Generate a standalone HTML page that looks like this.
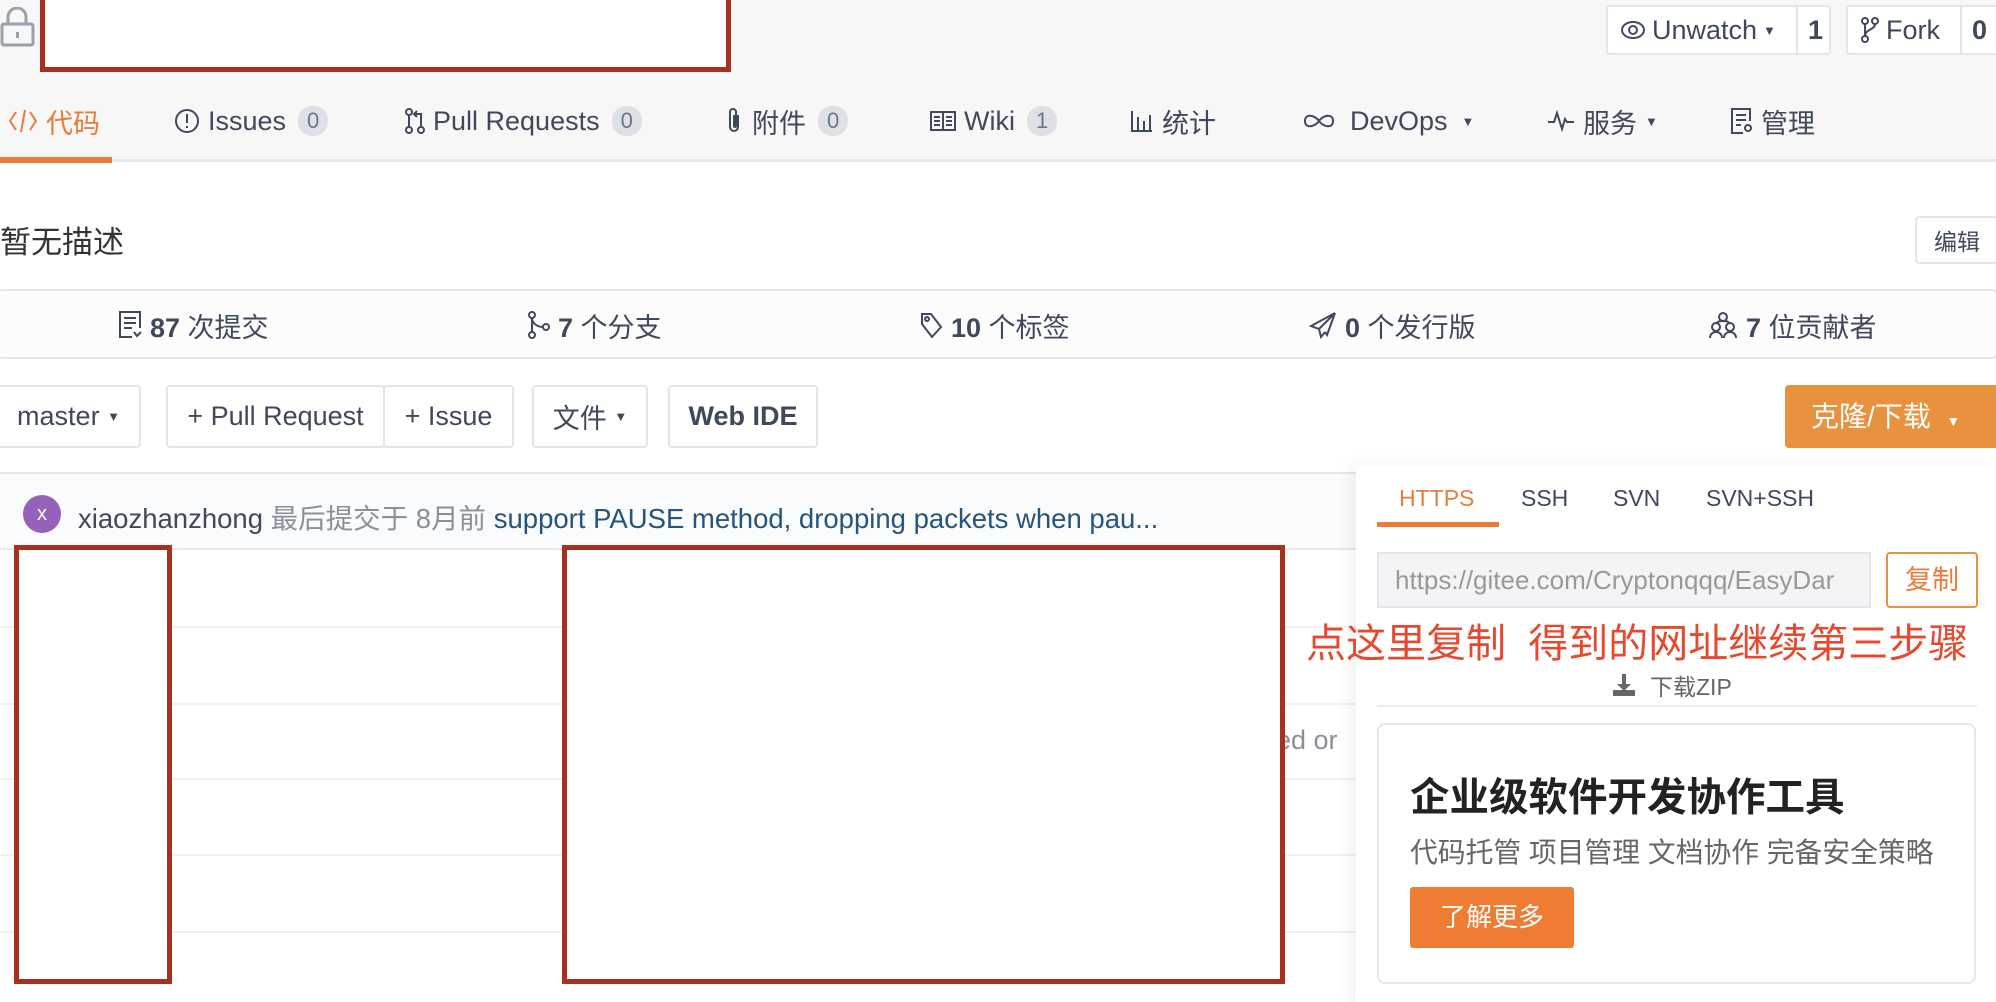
<!DOCTYPE html>
<html><head><meta charset="utf-8"><style>
*{margin:0;padding:0;box-sizing:border-box}
body{width:1996px;height:1002px;overflow:hidden;background:#fff;font-family:"Liberation Sans","Noto Sans CJK SC",sans-serif;color:#40485b;position:relative}
.a{position:absolute;white-space:nowrap}
.t{position:absolute;top:96px;height:50px;display:flex;align-items:center;font-size:27px;white-space:nowrap;gap:8px}
.s{position:absolute;top:300px;height:50px;display:flex;align-items:center;font-size:27px;white-space:nowrap;gap:8px}
.badge{display:inline-block;background:#dde0e5;color:#6a7590;border-radius:14px;font-size:22px;padding:2px 9px;margin-left:4px}
.btn{position:absolute;border:2px solid #e3e5e8;border-radius:4px;background:#fff;font-size:27px;display:flex;align-items:center;justify-content:center;color:#40485b;white-space:nowrap}
svg{flex:none}
.ic{fill:none;stroke:#40485b;stroke-width:2}
</style></head><body>
<div class="a" style="left:0;top:0;width:1996px;height:162px;background:#f7f7f8;border-bottom:3px solid #e6e7ea"></div>
<div class="a" style="left:0;top:157px;width:112px;height:6px;background:#e87c38"></div>
<svg class="a" style="left:0;top:7px" width="36" height="40" viewBox="0 0 36 40"><rect x="2" y="17" width="31" height="21" rx="2" fill="none" stroke="#9aa0ac" stroke-width="3"/><path d="M8 17V10a9 9 0 0 1 18 0v7" fill="none" stroke="#9aa0ac" stroke-width="3"/><line x1="17.5" y1="25" x2="17.5" y2="31" stroke="#9aa0ac" stroke-width="3"/></svg>
<div class="a" style="left:40px;top:-6px;width:691px;height:78px;border:5px solid #a8301f;background:#fff"></div>
<div class="btn" style="left:1606px;top:5px;width:225px;height:50px;justify-content:flex-start;padding-left:12px;gap:6px"><svg width="26" height="20" viewBox="0 0 26 20"><ellipse class="ic" cx="13" cy="10" rx="11" ry="8"/><circle class="ic" cx="13" cy="10" r="4"/></svg>Unwatch<span style="font-size:13px">&#9660;</span><span style="position:absolute;left:188px;top:0;height:46px;border-left:2px solid #e3e5e8;padding-left:10px;line-height:46px;font-weight:bold">1</span></div>
<div class="btn" style="left:1846px;top:5px;width:155px;height:50px;justify-content:flex-start;padding-left:12px;gap:6px"><svg width="20" height="26" viewBox="0 0 20 26"><circle class="ic" cx="5" cy="4" r="3"/><circle class="ic" cx="15" cy="4" r="3"/><circle class="ic" cx="5" cy="22" r="3"/><path class="ic" d="M5 7v12M15 7c0 6-10 5-10 12"/></svg>Fork<span style="position:absolute;left:112px;top:0;height:46px;border-left:2px solid #e3e5e8;padding-left:10px;line-height:46px;font-weight:bold">0</span></div>

<div class="t" style="left:8px;color:#e87c38"><svg width="30" height="26" viewBox="0 0 30 26"><path d="M8 4L2 13l6 9M22 4l6 9-6 9M17 2l-4 22" fill="none" stroke="#e87c38" stroke-width="2"/></svg>代码</div>
<div class="t" style="left:174px"><svg width="26" height="26" viewBox="0 0 26 26"><circle class="ic" cx="13" cy="13" r="11"/><path class="ic" d="M13 6v9M13 18v2"/></svg>Issues<span class="badge">0</span></div>
<div class="t" style="left:405px"><svg width="20" height="26" viewBox="0 0 20 26"><circle class="ic" cx="4" cy="4" r="3"/><circle class="ic" cx="4" cy="22" r="3"/><circle class="ic" cx="16" cy="22" r="3"/><path class="ic" d="M4 7v12M16 19V6h-6M12 3l-3 3 3 3"/></svg>Pull Requests<span class="badge">0</span></div>
<div class="t" style="left:724px"><svg width="20" height="28" viewBox="0 0 20 28"><path class="ic" d="M14 8v12a4 4 0 0 1-8 0V5a3 3 0 0 1 6 0v14a1 1 0 0 1-2 0V8"/></svg>附件<span class="badge">0</span></div>
<div class="t" style="left:930px"><svg width="26" height="22" viewBox="0 0 26 22"><rect class="ic" x="1" y="2" width="24" height="18"/><path class="ic" d="M13 2v18M4 7h6M4 11h6M4 15h6M16 7h6M16 11h6M16 15h6"/></svg>Wiki<span class="badge">1</span></div>
<div class="t" style="left:1130px"><svg width="24" height="24" viewBox="0 0 24 24"><path class="ic" d="M2 2v20h20M8 8v14M14 12v10M20 6v16"/></svg>统计</div>
<div class="t" style="left:1302px;gap:14px"><svg width="34" height="20" viewBox="0 0 34 20"><path class="ic" stroke-width="3" d="M17 10c-4-6-14-8-14 0s10 6 14 0 14-8 14 0-10 6-14 0z"/></svg>DevOps<span style="font-size:13px">&#9660;</span></div>
<div class="t" style="left:1547px"><svg width="28" height="24" viewBox="0 0 28 24"><path class="ic" d="M1 13h6l3-9 5 16 3-10 2 3h7"/></svg>服务<span style="font-size:13px">&#9660;</span></div>
<div class="t" style="left:1729px"><svg width="24" height="28" viewBox="0 0 24 28"><path class="ic" d="M14 26H3V2h18v12M7 8h10M7 13h10M7 18h5"/><circle class="ic" cx="19" cy="21" r="3"/></svg>管理</div>

<div class="a" style="top:217px;left:0;font-size:31px;color:#333">暂无描述</div>
<div class="btn" style="left:1915px;top:216px;width:84px;height:48px;font-size:23px">编辑</div>

<div class="a" style="left:-4px;top:289px;width:2002px;height:70px;border:2px solid #e6e7ea;border-radius:6px;background:#fcfcfd"></div>
<div class="s" style="left:118px"><svg width="24" height="30" viewBox="0 0 24 30"><path class="ic" d="M14 27H2V2h20v16M6 8h12M6 13h12M6 18h8M16 22l3 4 4-4"/></svg><span><b>87</b> 次提交</span></div>
<div class="s" style="left:528px"><svg width="22" height="28" viewBox="0 0 22 28"><circle class="ic" cx="4" cy="4" r="3"/><circle class="ic" cx="4" cy="24" r="3"/><circle class="ic" cx="18" cy="16" r="3"/><path class="ic" d="M4 7v14M15 16c-6 0-11-4-11-9"/></svg><span><b>7</b> 个分支</span></div>
<div class="s" style="left:919px"><svg width="24" height="28" viewBox="0 0 24 28"><path class="ic" d="M3 3h9l10 13-9 10L3 13z"/><circle class="ic" cx="8" cy="8" r="2"/></svg><span><b>10</b> 个标签</span></div>
<div class="s" style="left:1309px"><svg width="28" height="28" viewBox="0 0 28 28"><path class="ic" d="M26 2L2 15l8 3 2 8 4-5M26 2L10 18M26 2l-8 22-2-3"/></svg><span><b>0</b> 个发行版</span></div>
<div class="s" style="left:1708px"><svg width="30" height="28" viewBox="0 0 30 28"><circle class="ic" cx="15" cy="6" r="4"/><circle class="ic" cx="8" cy="16" r="4"/><circle class="ic" cx="22" cy="16" r="4"/><path class="ic" d="M2 27c0-4 3-6 6-6s6 2 6 6M16 27c0-4 3-6 6-6s6 2 6 6M9 12c1-2 3-2 6-2s5 0 6 2"/></svg><span><b>7</b> 位贡献者</span></div>

<div class="btn" style="left:-4px;top:385px;width:145px;height:63px">master&nbsp;<span style="font-size:13px">&#9660;</span></div>
<div class="btn" style="left:166px;top:385px;width:219px;height:63px">+ Pull Request</div>
<div class="btn" style="left:383px;top:385px;width:131px;height:63px">+ Issue</div>
<div class="btn" style="left:532px;top:385px;width:116px;height:63px">文件&nbsp;<span style="font-size:13px">&#9660;</span></div>
<div class="btn" style="left:668px;top:385px;width:150px;height:63px;font-weight:bold">Web IDE</div>
<div class="a" style="left:1785px;top:385px;width:215px;height:63px;background:#e8923f;border-radius:4px;color:#fff;font-size:28px;line-height:63px;padding-left:26px">克隆/下载 &nbsp;<span style="font-size:14px">&#9660;</span></div>

<div class="a" style="left:0;top:472px;width:1996px;height:78px;background:#fafbfc;border-top:2px solid #e6e7ea;border-bottom:2px solid #e6e7ea"></div>
<div class="a" style="left:23px;top:495px;width:38px;height:38px;border-radius:50%;background:#9462b8;color:#fff;font-size:20px;text-align:center;line-height:38px">x</div>
<div class="a" style="left:78px;top:496px;font-size:27.5px;color:#40485b">xiaozhanzhong <span style="color:#8a8f99">最后提交于 8月前</span> <span style="color:#275579">support PAUSE method, dropping packets when pau...</span></div>
<div class="a" style="left:0;top:626px;width:1996px;border-top:2px solid #f0f1f3"></div>
<div class="a" style="left:0;top:703px;width:1996px;border-top:2px solid #f0f1f3"></div>
<div class="a" style="left:0;top:778px;width:1996px;border-top:2px solid #f0f1f3"></div>
<div class="a" style="left:0;top:854px;width:1996px;border-top:2px solid #f0f1f3"></div>
<div class="a" style="left:0;top:931px;width:1996px;border-top:2px solid #f0f1f3"></div>
<div class="a" style="left:1276px;top:725px;font-size:27px;color:#8a8f99">ed or</div>
<div class="a" style="left:14px;top:545px;width:158px;height:439px;border:5px solid #a8301f;background:#fff"></div>
<div class="a" style="left:562px;top:545px;width:723px;height:439px;border:5px solid #a8301f;background:#fff"></div>

<div class="a" style="left:1356px;top:466px;width:640px;height:536px;background:#fff;box-shadow:-6px 0 14px rgba(0,0,0,0.06)"></div>
<div class="a" style="left:1399px;top:485px;font-size:23px;color:#e87c38">HTTPS</div>
<div class="a" style="left:1521px;top:485px;font-size:23px">SSH</div>
<div class="a" style="left:1613px;top:485px;font-size:23px">SVN</div>
<div class="a" style="left:1706px;top:485px;font-size:23px">SVN+SSH</div>
<div class="a" style="left:1377px;top:522px;width:122px;height:5px;background:#e87c38"></div>
<div class="a" style="left:1377px;top:552px;width:494px;height:56px;border:2px solid #e3e5e8;background:#f3f4f6;font-size:26px;color:#999;line-height:52px;padding-left:16px;overflow:hidden">https://gitee.com/Cryptonqqq/EasyDar</div>
<div class="a" style="left:1886px;top:552px;width:92px;height:56px;border:2px solid #e8923f;border-radius:4px;color:#e87c38;font-size:27px;text-align:center;line-height:52px">复制</div>
<div class="a" style="left:1306px;top:611px;font-size:40px;color:#e64a2e">点这里复制&nbsp; 得到的网址继续第三步骤</div>
<div class="a" style="left:1612px;top:668px;font-size:23px;color:#666;display:flex;align-items:center;gap:14px"><svg width="24" height="24" viewBox="0 0 24 24"><path d="M10 1h4v10h5l-7 7-7-7h5z" fill="#666"/><rect x="1" y="17" width="22" height="6" fill="#666"/></svg>下载ZIP</div>
<div class="a" style="left:1377px;top:705px;width:600px;border-top:2px solid #ececee"></div>
<div class="a" style="left:1377px;top:723px;width:599px;height:261px;border:2px solid #e6e7ea;border-radius:8px"></div>
<div class="a" style="left:1410px;top:766px;font-size:39.5px;font-weight:bold;color:#222">企业级软件开发协作工具</div>
<div class="a" style="left:1410px;top:831px;font-size:27.8px;color:#666">代码托管 项目管理 文档协作 完备安全策略</div>
<div class="a" style="left:1410px;top:887px;width:164px;height:61px;background:#ee7d33;border-radius:3px;color:#fff;font-size:26px;text-align:center;line-height:61px">了解更多</div>
</body></html>
